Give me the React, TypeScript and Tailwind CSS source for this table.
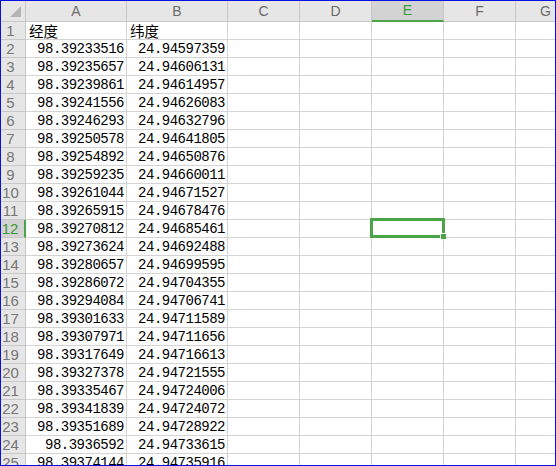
const cols = ["A", "B", "C", "D", "E", "F", "G"];
const widths = ["w-[101px]", "w-[101px]", "w-[72px]", "w-[72px]", "w-[72px]", "w-[72px]", "w-[60px]"];

const rows: [string, string][] = [
  ["经度", "纬度"],
  ["98.39233516", "24.94597359"],
  ["98.39235657", "24.94606131"],
  ["98.39239861", "24.94614957"],
  ["98.39241556", "24.94626083"],
  ["98.39246293", "24.94632796"],
  ["98.39250578", "24.94641805"],
  ["98.39254892", "24.94650876"],
  ["98.39259235", "24.94660011"],
  ["98.39261044", "24.94671527"],
  ["98.39265915", "24.94678476"],
  ["98.39270812", "24.94685461"],
  ["98.39273624", "24.94692488"],
  ["98.39280657", "24.94699595"],
  ["98.39286072", "24.94704355"],
  ["98.39294084", "24.94706741"],
  ["98.39301633", "24.94711589"],
  ["98.39307971", "24.94711656"],
  ["98.39317649", "24.94716613"],
  ["98.39327378", "24.94721555"],
  ["98.39335467", "24.94724006"],
  ["98.39341839", "24.94724072"],
  ["98.39351689", "24.94728922"],
  ["98.3936592", "24.94733615"],
  ["98.39374144", "24.94735916"],
];

const SEL_COL = 4; // E
const SEL_ROW = 12;

export default function App() {
  return (
    <div className="w-[556px] h-[466px] border border-[#0a10e0] bg-white overflow-hidden font-['Liberation_Sans',sans-serif]">
      {/* column headers */}
      <div className="flex h-[21px] bg-[#e6e6e6]">
        <div className="relative w-[25px] shrink-0 border-r border-b border-[#c8c8c8]">
          <svg className="absolute left-[9px] top-[5px]" width="11" height="11" viewBox="0 0 11 11">
            <polygon points="11,0 11,11 0,11" fill="#b4b4b4" />
          </svg>
        </div>
        {cols.map((c, i) => (
          <div
            key={c}
            className={
              i === SEL_COL
                ? `${widths[i]} shrink-0 flex items-center justify-center border-r border-[#c8c8c8] border-b-2 border-b-[#4ba548] bg-[#d3d3d3] text-[14px] text-[#3b9a3b]`
                : `${widths[i]} shrink-0 flex items-center justify-center border-r border-b border-[#c8c8c8] text-[14px] text-[#6b6b6b]`
            }
          >
            {c}
          </div>
        ))}
      </div>

      {rows.map((r, idx) => {
        const n = idx + 1;
        const sel = n === SEL_ROW;
        return (
          <div key={n} className="flex h-[18px]">
            <div
              className={
                sel
                  ? "w-[25px] shrink-0 flex items-end justify-center pr-[5px] border-b border-[#c8c8c8] border-r-2 border-r-[#4ba548] bg-[#d3d3d3] text-[15px] leading-[17px] text-[#3b9a3b]"
                  : "w-[25px] shrink-0 flex items-end justify-center pr-[5px] border-r border-b border-[#c8c8c8] bg-[#e6e6e6] text-[15px] leading-[17px] text-[#777]"
              }
            >
              {n}
            </div>
            {cols.map((c, i) => {
              const text = i === 0 ? r[0] : i === 1 ? r[1] : "";
              const header = n === 1;
              return (
                <div
                  key={c}
                  className={`${widths[i]} relative shrink-0 flex items-end border-r border-b border-[#d4d4d4] ${
                    header ? "justify-start pl-[3px]" : "justify-end pr-[2px]"
                  }`}
                >
                  {text && (
                    <span
                      className={
                        header
                          ? "font-['Noto_Sans_CJK_SC',sans-serif] text-[14.5px] leading-[17px] text-black"
                          : "font-['Liberation_Mono',monospace] text-[14px] tracking-[-0.5px] leading-[16px] text-black"
                      }
                    >
                      {text}
                    </span>
                  )}
                  {sel && i === SEL_COL && (
                    <div className="absolute z-10 -left-[2px] -top-[2px] -right-[2px] -bottom-[1px] border-[3px] border-[#4ba548]">
                      <div className="absolute -right-[4px] -bottom-[4px] w-[6px] h-[6px] bg-[#4ba548] border-l border-t border-white" />
                    </div>
                  )}
                </div>
              );
            })}
          </div>
        );
      })}
    </div>
  );
}
